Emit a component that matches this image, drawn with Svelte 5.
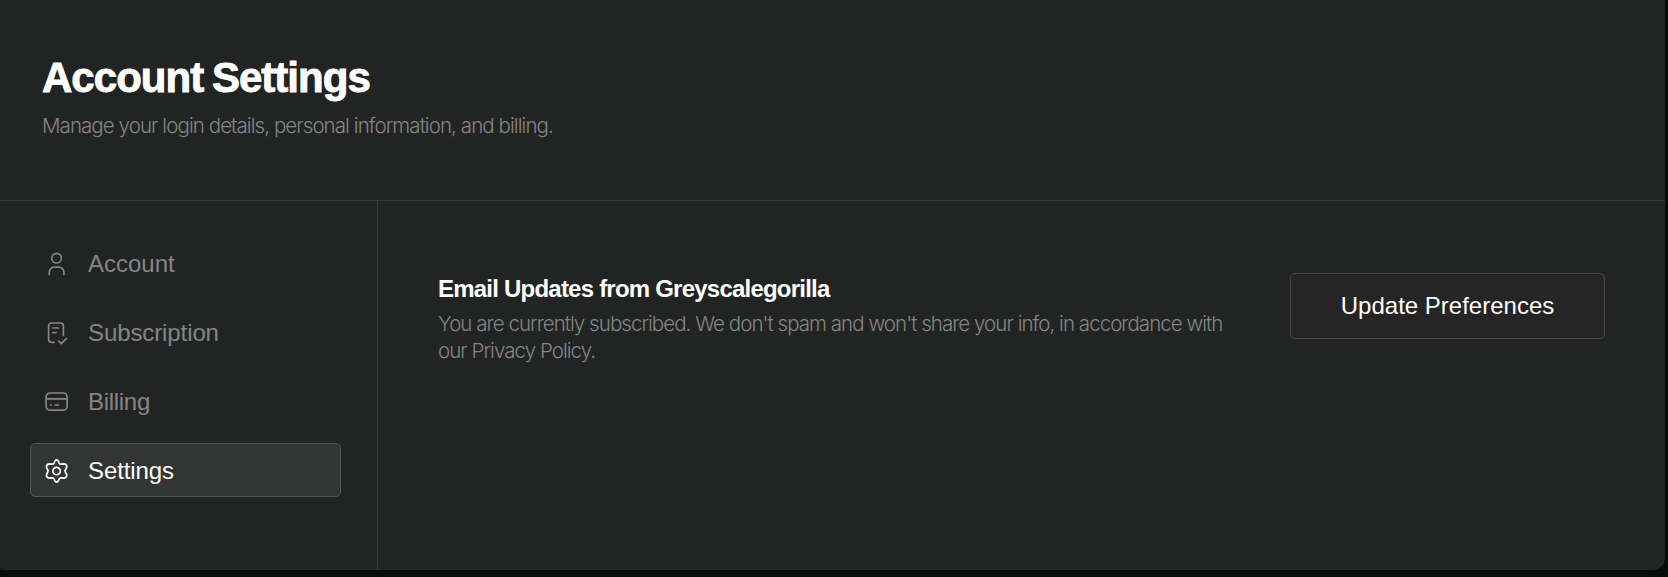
<script>
    let active = 'settings';

    const items = [
        {id: 'account', label: 'Account'},
        {id: 'subscription', label: 'Subscription'},
        {id: 'billing', label: 'Billing'},
        {id: 'settings', label: 'Settings'}
    ];
</script>

<div class="panel">
    <header>
        <h1>Account Settings</h1>
        <p class="intro">Manage your login details, personal information, and billing.</p>
    </header>

    <div class="columns">
        <nav>
            {#each items as item (item.id)}
                <button class="item {item.id}" class:active={active === item.id} on:click={() => active = item.id}>
                    <svg viewBox="0.4 0 24 24" width="24" height="24">
                        {#if item.id === 'account'}
                            <circle cx="12" cy="6.2" r="4.8"/>
                            <path d="M4.7 22.4v-2.2a5 5 0 0 1 5-5h4.6a5 5 0 0 1 5 5v2.2"/>
                        {:else if item.id === 'subscription'}
                            <path d="M9.5 21.3H7a3 3 0 0 1-3-3V5a3 3 0 0 1 3-3h8.8a3 3 0 0 1 3 3v9.3M8.3 7h5.6M8.3 11.6h3.2M14 20.2l2.7 2.5 5-5"/>
                        {:else if item.id === 'billing'}
                            <rect x="1.5" y="3" width="21" height="17.2" rx="4"/>
                            <path d="M1.5 8.9h21M6 15h.6M10.7 15h3"/>
                        {:else}
                            <path d="M10.2 2.3Q12 -.5 13.8 2.3L14.4 3.8Q15.1 5.4 16.9 5.2L18.7 4.9Q22 4.9 22.2 7.6Q22.2 8.7 21.4 9.8Q19.7 12 21.4 14.2Q22.2 15.3 22.2 16.4Q22 19.1 18.7 19.1L16.9 18.8Q15.1 18.6 14.4 20.2L13.8 21.7Q12 24.5 10.2 21.7L9.6 20.2Q8.9 18.6 7.1 18.8L5.3 19.1Q2 19.1 1.8 16.4Q1.8 15.3 2.6 14.2Q4.3 12 2.6 9.8Q1.8 8.7 1.8 7.6Q2 4.9 5.3 4.9L7.1 5.2Q8.9 5.4 9.6 3.8Z"/>
                            <circle cx="12" cy="12" r="3.7"/>
                        {/if}
                    </svg>
                    <span>{item.label}</span>
                </button>
            {/each}
        </nav>

        <main>
            <div class="text">
                <h2>Email Updates from Greyscalegorilla</h2>
                <p>You are currently subscribed. We don't spam and won't share your info, in accordance with our Privacy Policy.</p>
            </div>
            <button class="update">Update Preferences</button>
        </main>
    </div>
</div>

<style>
    :global(body) {
        background-color: #090b0a;
        overflow: hidden;
    }

    .panel {
        width: 1673px;
        height: 570px;
        margin-left: -8px;
        box-sizing: border-box;
        padding-left: 8px;
        display: flex;
        flex-direction: column;
        background-color: #222423;
        border-radius: 0 0 12px 12px;
        font-family: "Liberation Sans", Arial, sans-serif;
        color: #fff;
    }

    header {
        height: 200px;
        border-bottom: 1px solid #373938;
    }

    h1 {
        margin: 0;
        padding: 53px 0 0 42px;
        font-size: 42px;
        line-height: 50px;
        letter-spacing: -.97px;
        word-spacing: -2px;
        -webkit-text-stroke: .9px #fff;
    }

    p {
        margin: 0;
        font-family: Inter, "Liberation Sans", sans-serif;
        font-weight: 300;
        font-size: 20.5px;
        line-height: 27px;
        letter-spacing: -.95px;
        color: #858585;
    }

    .intro {
        padding: 9px 0 0 42px;
        letter-spacing: -.92px;
    }

    .columns {
        flex: 1;
        display: flex;
    }

    nav {
        width: 377px;
        box-sizing: border-box;
        padding: 35px 0 0 30px;
        display: flex;
        flex-direction: column;
        gap: 15px;
    }

    .item {
        width: 311px;
        height: 54px;
        padding: 2px 0 0 14px;
        display: flex;
        align-items: center;
        gap: 19px;
        border: 1px solid transparent;
        border-radius: 5px;
        background: none;
        font-family: inherit;
        font-size: 24px;
        letter-spacing: -.1px;
        color: #858585;
    }

    .item.active {
        background-color: #333534;
        border-color: #535554;
        color: #fff;
    }

    .account {
        letter-spacing: 0;
    }

    .billing {
        letter-spacing: -.3px;
    }

    svg {
        fill: none;
        stroke: currentColor;
        stroke-width: 1.7;
        stroke-linecap: round;
        stroke-linejoin: round;
    }

    main {
        flex: 1;
        display: flex;
        justify-content: space-between;
        align-items: flex-start;
        border-left: 1px solid #373938;
        padding: 72px 60px 0 60px;
    }

    .text {
        width: 800px;
        padding-top: 1px;
    }

    h2 {
        margin: 0 0 6px;
        font-size: 24px;
        line-height: 30px;
        letter-spacing: -.78px;
    }

    .update {
        width: 315px;
        height: 66px;
        border: 1px solid #484848;
        border-radius: 5px;
        background-color: #252525;
        font-family: inherit;
        font-size: 24px;
        color: #fff;
    }
</style>
